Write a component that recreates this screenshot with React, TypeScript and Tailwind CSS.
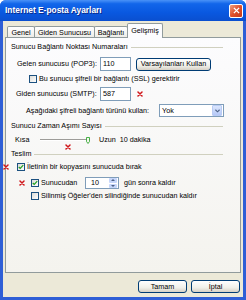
import type { ReactNode } from 'react';

function RedX({ className = '' }: { className?: string }) {
    return (
        <svg viewBox="0 0 6 6" className={`w-[6px] h-[6px] shrink-0 ${className}`}>
            <path d="M1 1L5 5M5 1L1 5" stroke="#d0161a" strokeWidth="1.5" strokeLinecap="round" />
        </svg>
    );
}

function Check({ checked = false }: { checked?: boolean }) {
    return (
        <span className="w-[8px] h-[8px] shrink-0 border border-[#1c5180] bg-[linear-gradient(135deg,#dcdcd7,#ffffff)] flex items-center justify-center">
            {checked && (
                <svg viewBox="0 0 8 8" className="w-[6px] h-[6px]">
                    <path d="M1 4L3 6L7 1.5" stroke="#21a121" strokeWidth="1.6" fill="none" />
                </svg>
            )}
        </span>
    );
}

function Header({ children }: { children: ReactNode }) {
    return (
        <div className="mt-[4px] h-[10px] flex items-center gap-[3px] pl-[5px] pr-[17px]">
            <span className="whitespace-nowrap">{children}</span>
            <span className="flex-1 h-px bg-[#d0d0bf]"></span>
        </div>
    );
}

function XpButton({ children, className = '' }: { children: ReactNode; className?: string }) {
    return (
        <button className={`h-[13px] border border-[#003c74] rounded-[3px] bg-[linear-gradient(to_bottom,#ffffff,#f0f0ea_60%,#d6d0c5)] flex items-center justify-center leading-none ${className}`}>
            {children}
        </button>
    );
}

export default function App() {
    const tabs = ['Genel', 'Giden Sunucusu', 'Bağlantı'];
    const tabWidths = ['w-[28px]', 'w-[61px]', 'w-[34px]'];

    return (
        <div className="w-[246px] h-[300px] flex flex-col bg-[#2f5fd6] rounded-t-[6px] overflow-hidden font-['Liberation_Sans',Arial,sans-serif] text-[7.2px] leading-none text-black">
            {/* Title bar */}
            <div className="h-[21px] shrink-0 flex items-center justify-between pl-[5px] pr-[3px] bg-[linear-gradient(to_bottom,#4a92f7_0%,#1266ea_18%,#0958e0_60%,#0a4fcf_100%)]">
                <span className="text-white font-bold text-[8.4px] [text-shadow:1px_1px_0_#0a2a8a]">Internet E-posta Ayarları</span>
                <span className="w-[14px] h-[14px] rounded-[2px] border border-white bg-[linear-gradient(135deg,#f0a080,#e0502c_50%,#c23a1c)] flex items-center justify-center">
                    <svg viewBox="0 0 8 8" className="w-[7px] h-[7px]">
                        <path d="M1 1L7 7M7 1L1 7" stroke="#ffffff" strokeWidth="1.6" />
                    </svg>
                </span>
            </div>

            {/* Body */}
            <div className="flex-1 mx-[3px] mb-[3px] bg-[#ece9d8] flex flex-col">
                {/* Tabs */}
                <div className="mt-[2px] ml-[4px] h-[15px] flex items-end">
                    {tabs.map((t, i) => (
                        <div
                            key={t}
                            className={`${tabWidths[i]} ${i > 0 ? '-ml-px' : ''} h-[12px] border border-b-0 border-[#919b9c] rounded-t-[2px] bg-[linear-gradient(to_bottom,#ffffff,#ecebe6)] flex items-center justify-center`}
                        >
                            {t}
                        </div>
                    ))}
                    <div className="relative z-10 -ml-px w-[36px] h-[15px] border border-b-0 border-[#919b9c] rounded-t-[2px] bg-[#fcfcfe] flex items-center justify-center pb-[1px]">
                        Gelişmiş
                    </div>
                </div>

                {/* Panel */}
                <div className="-mt-px ml-[2px] w-[236px] h-[236px] shrink-0 border border-[#919b9c] bg-[linear-gradient(to_bottom,#fcfcfe,#f4f3ee)] flex flex-col">
                    <Header>Sunucu Bağlantı Noktası Numaraları</Header>

                    <div className="mt-[5px] h-[14px] flex items-center pl-[11px]">
                        <span className="w-[83px]">Gelen sunucusu (POP3):</span>
                        <span className="w-[31px] h-[14px] border border-[#7f9db9] bg-white flex items-center pl-[2px]">110</span>
                        <XpButton className="ml-[5px] w-[75px]">Varsayılanları Kullan</XpButton>
                    </div>

                    <div className="mt-[4px] h-[8px] flex items-center pl-[23px] gap-[2px]">
                        <Check />
                        <span>Bu sunucu şifreli bir bağlantı (SSL) gerektirir</span>
                    </div>

                    <div className="mt-[4px] h-[14px] flex items-center pl-[10px]">
                        <span className="w-[84px]">Giden sunucusu (SMTP):</span>
                        <span className="w-[31px] h-[14px] border border-[#7f9db9] bg-white flex items-center pl-[2px]">587</span>
                        <RedX className="ml-[6px]" />
                    </div>

                    <div className="mt-[3px] h-[13px] flex items-center pl-[20px]">
                        <span className="w-[133px]">Aşağıdaki şifreli bağlantı türünü kullan:</span>
                        <span className="w-[65px] h-[13px] border border-[#7f9db9] bg-white flex items-center justify-between pl-[2px] pr-px">
                            Yok
                            <span className="w-[10px] h-[11px] rounded-[1px] bg-[linear-gradient(to_bottom,#dbe6fd,#b5c8f7)] border border-[#b9cbf4] flex items-center justify-center">
                                <svg viewBox="0 0 6 4" className="w-[5px] h-[4px]">
                                    <path d="M0.5 0.5L3 3L5.5 0.5" stroke="#4d6185" strokeWidth="1.3" fill="none" />
                                </svg>
                            </span>
                        </span>
                    </div>

                    <Header>Sunucu Zaman Aşımı Sayısı</Header>

                    <div className="mt-[4px] h-[10px] flex items-center pl-[9px]">
                        <span className="w-[25px]">Kısa</span>
                        <div className="relative w-[50px] h-[10px] flex items-center">
                            <span className="w-full h-[2px] border-t border-[#9d9c99] border-b border-b-white bg-[#ecebe6]"></span>
                            <svg viewBox="0 0 4 7" className="absolute right-0 top-[2px] w-[4px] h-[7px]">
                                <path d="M0.5 0.5H3.5V4.5L2 6.5L0.5 4.5Z" fill="#f4f4ee" stroke="#1ea01e" strokeWidth="0.8" />
                            </svg>
                            <RedX className="absolute left-[25px] top-[9px]" />
                        </div>
                        <span className="ml-[9px]">Uzun</span>
                        <span className="ml-[4px]">10 dakika</span>
                    </div>

                    <Header>Teslim</Header>

                    <div className="mt-[3px] h-[10px] flex items-center">
                        <RedX className="-ml-[3px]" />
                        <span className="ml-[8px]"><Check checked /></span>
                        <span className="ml-[2px]">İletinin bir kopyasını sunucuda bırak</span>
                    </div>

                    <div className="mt-[5px] h-[12px] flex items-center pl-[13px]">
                        <RedX />
                        <span className="ml-[6px]"><Check checked /></span>
                        <span className="ml-[2px] w-[44px]">Sunucudan</span>
                        <span className="w-[34px] h-[12px] border border-[#7f9db9] bg-white flex items-center justify-between pl-[5px] pr-px">
                            10
                            <span className="w-[8px] h-[10px] flex flex-col gap-px">
                                <span className="flex-1 rounded-[1px] bg-[#c6d6fb] flex items-center justify-center">
                                    <svg viewBox="0 0 4 2" className="w-[4px] h-[2px]"><path d="M0 2L2 0L4 2Z" fill="#4d6185" /></svg>
                                </span>
                                <span className="flex-1 rounded-[1px] bg-[#c6d6fb] flex items-center justify-center">
                                    <svg viewBox="0 0 4 2" className="w-[4px] h-[2px]"><path d="M0 0L2 2L4 0Z" fill="#4d6185" /></svg>
                                </span>
                            </span>
                        </span>
                        <span className="ml-[5px]">gün sonra kaldır</span>
                    </div>

                    <div className="mt-[2px] h-[10px] flex items-center pl-[25px]">
                        <Check />
                        <span className="ml-[2px]">Silinmiş Öğeler'den silindiğinde sunucudan kaldır</span>
                    </div>
                </div>

                {/* Buttons */}
                <div className="mt-[7px] flex justify-end gap-[4px] pr-[3px]">
                    <XpButton className="w-[49px]">Tamam</XpButton>
                    <XpButton className="w-[49px]">İptal</XpButton>
                </div>
            </div>
        </div>
    );
}
